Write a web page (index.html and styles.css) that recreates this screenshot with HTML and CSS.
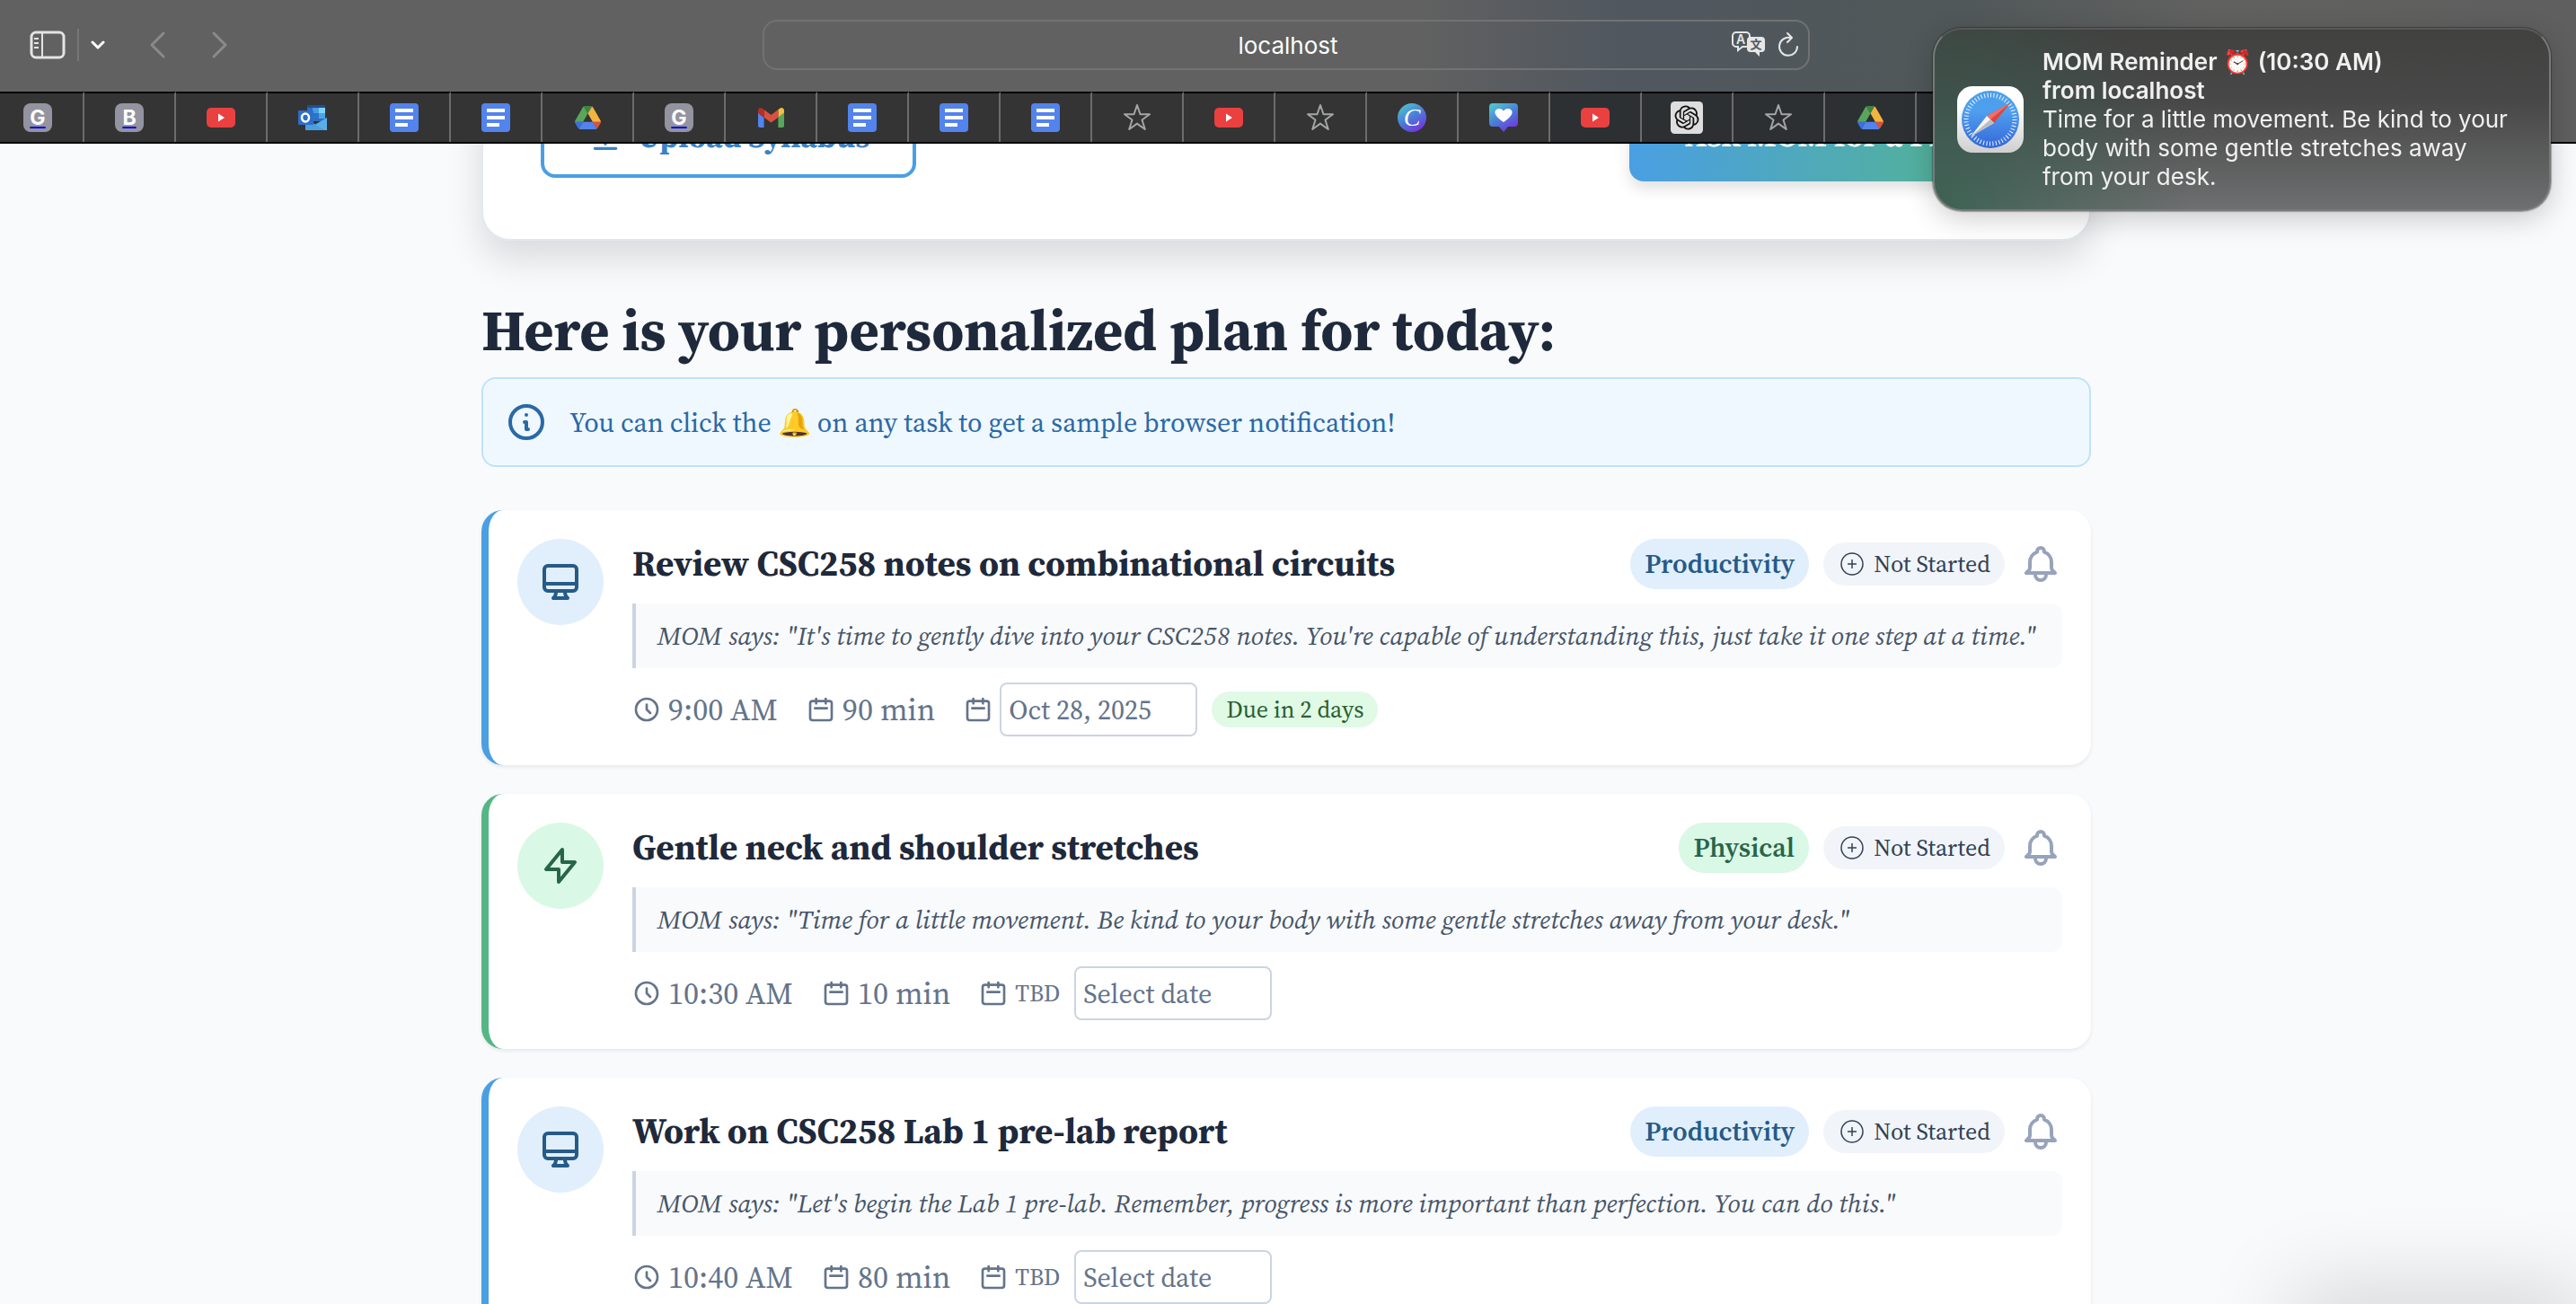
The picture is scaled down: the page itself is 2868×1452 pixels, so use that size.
FILE: index.html
```
<!DOCTYPE html>
<html lang="en">

<head>
    <meta charset="UTF-8">
    <meta name="viewport" content="width=device-width, initial-scale=1.0">
    <title>MOM - Daily Plan</title>
    <link rel="stylesheet" href="styles.css">
</head>

<body>
    <!-- Shared icons -->
    <svg class="sprite" aria-hidden="true">
        <defs>
            <linearGradient id="canvaFill" x1="0.2" y1="0" x2="0.8" y2="1">
                <stop offset="0" stop-color="#4fc3cf" />
                <stop offset="0.5" stop-color="#4a7bd8" />
                <stop offset="1" stop-color="#7a2be0" />
            </linearGradient>
            <linearGradient id="safariBase" x1="0" y1="0" x2="0" y2="1">
                <stop offset="0.3" stop-color="#ffffff" />
                <stop offset="1" stop-color="#cfcfcf" />
            </linearGradient>
            <linearGradient id="safariDial" x1="0" y1="0" x2="0" y2="1">
                <stop offset="0" stop-color="#4a9fe6" />
                <stop offset="0.35" stop-color="#4f9ff0" />
                <stop offset="1" stop-color="#3566d8" />
            </linearGradient>
            <symbol id="youtube" viewBox="0 0 32 32">
                <rect y="5" width="32" height="22" rx="5" fill="#ea4040" />
                <path d="M13 11.5v9l7-4.500z" fill="#fff" />
            </symbol>
            <symbol id="outlook" viewBox="0 0 32 32">
                <path d="M10 2h20v18H10z" fill="#2b6fc0" />
                <path d="M10 2h20v3H10z" fill="#1f4f92" />
                <path d="M16 5h7v6h-7z" fill="#4b9be0" />
                <path d="M23 5h7v6h-7z" fill="#7fd3fb" />
                <path d="M23 11h7v6h-7z" fill="#4ba3e8" />
                <path d="M16 11h7v6h-7z" fill="#2c73cb" />
                <path d="M8 16l12 8 12-8v14H8z" fill="#3b86d0" />
                <path d="M8 30l24-14v14z" fill="#5aaee8" />
                <path d="M8 18l22 12H8z" fill="#4a9fdf" />
                <rect y="8" width="17" height="16" rx="1" fill="#2d6fc9" />
                <ellipse cx="8" cy="16" rx="4" ry="4.500" fill="none" stroke="#fff" stroke-width="2.500" />
            </symbol>
            <symbol id="docs" viewBox="0 0 32 32">
                <rect width="32" height="32" rx="4" fill="#5383ec" />
                <path d="M6 8h20M6 16h20M6 24h14" stroke="#fff" stroke-width="4" />
            </symbol>
            <symbol id="drive" viewBox="0 0 87.3 78">
                <path d="m6.6 66.85 3.85 6.65c.8 1.4 1.95 2.5 3.3 3.3l13.75-23.8h-27.5c0 1.55.4 3.1 1.2 4.5z" fill="#3b6fe0" />
                <path d="m43.65 25-13.75-23.8c-1.35.8-2.5 1.9-3.3 3.3l-25.4 44a9.06 9.06 0 0 0 -1.2 4.5h27.5z" fill="#58a65c" />
                <path d="m73.55 76.8c1.35-.8 2.5-1.9 3.3-3.3l1.6-2.75 7.65-13.25c.8-1.4 1.2-2.95 1.2-4.5h-27.5l5.85 11.5z" fill="#d95140" />
                <path d="m43.65 25 13.75-23.8c-1.35-.8-2.9-1.2-4.5-1.2h-18.5c-1.6 0-3.15.45-4.5 1.2z" fill="#3f8344" />
                <path d="m59.8 53h-32.3l-13.75 23.8c1.35.8 2.9 1.2 4.5 1.2h50.8c1.6 0 3.15-.45 4.5-1.2z" fill="#5383ec" />
                <path d="m73.4 26.5-12.7-22c-.8-1.4-1.95-2.5-3.3-3.3l-13.75 23.8 16.15 28h27.45c0-1.55-.4-3.1-1.2-4.5z" fill="#f1b43f" />
            </symbol>
            <symbol id="gmail" viewBox="52 42 88 66">
                <path fill="#5383ec" d="M58 108h14V74L52 59v43c0 3.32 2.69 6 6 6" />
                <path fill="#58a65c" d="M120 108h14c3.32 0 6-2.69 6-6V59l-20 15" />
                <path fill="#f1bf42" d="M120 48v26l20-15v-8c0-7.42-8.47-11.65-14.4-7.2" />
                <path fill="#d95140" d="M72 74V48l24 18 24-18v26L96 92" />
                <path fill="#b3302a" d="M52 51v8l20 15V48l-5.6-4.2c-5.94-4.45-14.4-.22-14.4 7.2" />
            </symbol>
            <symbol id="star" viewBox="0 0 32 32">
                <path d="M16 2l3.500 10.200h10.500l-8.500 6.300 3.300 10.500-8.800-6.400-8.800 6.400 3.300-10.500L2 12.200h10.500z" fill="none" stroke="#a3a5a6" stroke-width="2" stroke-linejoin="round" />
            </symbol>
            <symbol id="canva" viewBox="0 0 32 32">
                <circle cx="16" cy="16" r="16" fill="url(#canvaFill)" />
                <text x="16" y="25" class="canva-letter" text-anchor="middle">C</text>
            </symbol>
            <symbol id="heart" viewBox="0 0 32 32">
                <path d="M4 0h24a4 4 0 0 1 4 4v18a4 4 0 0 1-4 4h-7l-5 6-5-6H4a4 4 0 0 1-4-4V4a4 4 0 0 1 4-4z" fill="url(#canvaFill)" />
                <path d="M16 21C10 17 6 13 6.500 9.500 7 5.500 13 4.500 16 8.500c3-4 9-3 9.500 1C26 13 22 17 16 21z" fill="#fff" />
            </symbol>
            <symbol id="chatgpt" viewBox="-4 -4 32 32">
                <rect x="-4" y="-4" width="32" height="32" rx="4" fill="#dedede" />
                <path d="M22.2819 9.8211a5.9847 5.9847 0 0 0-.5157-4.9108 6.0462 6.0462 0 0 0-6.5098-2.9A6.0651 6.0651 0 0 0 4.9807 4.1818a5.9847 5.9847 0 0 0-3.9977 2.9 6.0462 6.0462 0 0 0 .7427 7.0966 5.98 5.98 0 0 0 .511 4.9107 6.051 6.051 0 0 0 6.5146 2.9001A5.9847 5.9847 0 0 0 13.2599 24a6.0557 6.0557 0 0 0 5.7718-4.2058 5.9894 5.9894 0 0 0 3.9977-2.9001 6.0557 6.0557 0 0 0-.7475-7.0729zm-9.022 12.6081a4.4755 4.4755 0 0 1-2.8764-1.0408l.1419-.0804 4.7783-2.7582a.7948.7948 0 0 0 .3927-.6813v-6.7369l2.02 1.1686a.071.071 0 0 1 .038.052v5.5826a4.504 4.504 0 0 1-4.4945 4.4944zm-9.6607-4.1254a4.4708 4.4708 0 0 1-.5346-3.0137l.142.0852 4.783 2.7582a.7712.7712 0 0 0 .7806 0l5.8428-3.3685v2.3324a.0804.0804 0 0 1-.0332.0615L9.74 19.9502a4.4992 4.4992 0 0 1-6.1408-1.6464zM2.3408 7.8956a4.485 4.485 0 0 1 2.3655-1.9728V11.6a.7664.7664 0 0 0 .3879.6765l5.8144 3.3543-2.0201 1.1685a.0757.0757 0 0 1-.071 0l-4.8303-2.7865A4.504 4.504 0 0 1 2.3408 7.872zm16.5963 3.8558L13.1038 8.364 15.1192 7.2a.0757.0757 0 0 1 .071 0l4.8303 2.7913a4.4944 4.4944 0 0 1-.6765 8.1042v-5.6772a.79.79 0 0 0-.407-.667zm2.0107-3.0231l-.142-.0852-4.7735-2.7818a.7759.7759 0 0 0-.7854 0L9.409 9.2297V6.8974a.0662.0662 0 0 1 .0284-.0615l4.8303-2.7866a4.4992 4.4992 0 0 1 6.6802 4.66zM8.3065 12.863l-2.02-1.1638a.0804.0804 0 0 1-.038-.0567V6.0742a4.4992 4.4992 0 0 1 7.3757-3.4537l-.142.0805L8.704 5.459a.7948.7948 0 0 0-.3927.6813zm1.0976-2.3654l2.602-1.4998 2.6069 1.4998v2.9994l-2.5974 1.4997-2.6067-1.4997Z" fill="#111" />
            </symbol>
            <symbol id="monitor" viewBox="0 0 24 24">
                <path d="M9.75 17L9 20l-1 1h8l-1-1-.75-3M3 13h18M5 17h14a2 2 0 002-2V5a2 2 0 00-2-2H5a2 2 0 00-2 2v10a2 2 0 002 2z" />
            </symbol>
            <symbol id="bolt" viewBox="0 0 24 24">
                <path d="M13 10V3L4 14h7v7l9-11h-7z" />
            </symbol>
            <symbol id="clock" viewBox="0 0 24 24">
                <path d="M12 8v4l3 3m6-3a9 9 0 11-18 0 9 9 0 0118 0z" />
            </symbol>
            <symbol id="calendar" viewBox="0 0 24 24">
                <path d="M8 7V3m8 4V3m-9 8h10M5 21h14a2 2 0 002-2V7a2 2 0 00-2-2H5a2 2 0 00-2 2v12a2 2 0 002 2z" />
            </symbol>
            <symbol id="info" viewBox="0 0 24 24">
                <path d="M13 16h-1v-4h-1m1-4h.01M21 12a9 9 0 11-18 0 9 9 0 0118 0z" />
            </symbol>
            <symbol id="bell" viewBox="0 0 24 24">
                <path d="M15 17h5l-1.405-1.405A2.032 2.032 0 0118 14.158V11a6.002 6.002 0 00-4-5.659V5a2 2 0 10-4 0v.341C7.67 6.165 6 8.388 6 11v3.159c0 .538-.214 1.055-.595 1.436L4 17h5m6 0v1a3 3 0 11-6 0v-1m6 0H9" />
            </symbol>
            <symbol id="upload" viewBox="0 0 24 24">
                <path d="M5 20h14M12 17V5M7 10l5-5 5 5" />
            </symbol>
            <symbol id="plus-circle" viewBox="0 0 32 32">
                <circle cx="16" cy="16" r="12" stroke-width="1.5" />
                <path d="M16 11v10M11 16h10" stroke-width="1.5" />
            </symbol>
        </defs>
    </svg>

    <header class="browser">
        <div class="toolbar">
            <div class="toolbar-left">
                <button class="tool" aria-label="Sidebar">
                    <svg width="40" height="32" viewBox="0 0 40 32" fill="none" stroke="#e4e4e4" stroke-width="3">
                        <rect x="2" y="2" width="36" height="28" rx="5" />
                        <path d="M14 2v28" stroke-width="2" />
                        <path d="M5 9h5M5 14h5M5 19h5" stroke-width="2" />
                    </svg>
                </button>
                <span class="tool-divider"></span>
                <button class="tool" aria-label="Tab groups">
                    <svg width="16" height="12" viewBox="0 0 16 12" fill="none" stroke="#fff" stroke-width="3" stroke-linecap="round" stroke-linejoin="round"><path d="M2 3l6 6 6-6" /></svg>
                </button>
                <button class="tool back-btn" aria-label="Back">
                    <svg width="20" height="32" viewBox="0 0 20 32" fill="none" stroke="#8a8a88" stroke-width="3" stroke-linecap="round" stroke-linejoin="round"><path d="M17 3L4 16l13 13" /></svg>
                </button>
                <button class="tool" aria-label="Forward">
                    <svg width="20" height="32" viewBox="0 0 20 32" fill="none" stroke="#8a8a88" stroke-width="3" stroke-linecap="round" stroke-linejoin="round"><path d="M3 3l13 13L3 29" /></svg>
                </button>
            </div>
            <div class="address">
                <input type="text" value="localhost" aria-label="Address">
                <button class="tool" aria-label="Translate">
                    <svg width="40" height="32" viewBox="0 0 40 32">
                        <path d="M6 2h11a4 4 0 0 1 4 4v8a4 4 0 0 1-4 4h-4l-5 4v-4H6a4 4 0 0 1-4-4V6a4 4 0 0 1 4-4z" fill="none" stroke="#e6e6e6" stroke-width="2" />
                        <text x="11" y="15" class="glyph-a" text-anchor="middle">A</text>
                        <path d="M22 7h12a4 4 0 0 1 4 4v9a4 4 0 0 1-4 4h-2v5l-5-5h-5a4 4 0 0 1-4-4v-9a4 4 0 0 1 4-4z" fill="#e6e6e6" />
                        <text x="28" y="20" class="glyph-wen" text-anchor="middle">文</text>
                    </svg>
                </button>
                <button class="tool" aria-label="Reload">
                    <svg width="24" height="32" viewBox="0 0 24 32" fill="none" stroke="#e6e6e6" stroke-width="2" stroke-linecap="round" stroke-linejoin="round"><path d="M22 18a10 10 0 1 1-8-10M11 3l5 5-5 5" /></svg>
                </button>
            </div>
            <div class="toolbar-right">
                <button class="tool" aria-label="Share">
                    <svg width="32" height="40" viewBox="0 0 32 40" fill="none" stroke="#e6e6e6" stroke-width="3"><path d="M10 16H4v20h24V16h-6M16 26V4M10 10l6-6 6 6" /></svg>
                </button>
            </div>
        </div>
        <nav class="tabs">
            <a class="tab" href="#"><span class="letter">G</span></a>
            <a class="tab" href="#"><span class="letter">B</span></a>
            <a class="tab" href="#"><svg class="fav"><use href="#youtube" /></svg></a>
            <a class="tab" href="#"><svg class="fav"><use href="#outlook" /></svg></a>
            <a class="tab" href="#"><svg class="fav"><use href="#docs" /></svg></a>
            <a class="tab" href="#"><svg class="fav"><use href="#docs" /></svg></a>
            <a class="tab" href="#"><svg class="fav fav-small"><use href="#drive" /></svg></a>
            <a class="tab" href="#"><span class="letter">G</span></a>
            <a class="tab" href="#"><svg class="fav fav-small"><use href="#gmail" /></svg></a>
            <a class="tab" href="#"><svg class="fav"><use href="#docs" /></svg></a>
            <a class="tab" href="#"><svg class="fav"><use href="#docs" /></svg></a>
            <a class="tab" href="#"><svg class="fav"><use href="#docs" /></svg></a>
            <a class="tab" href="#"><svg class="fav"><use href="#star" /></svg></a>
            <a class="tab" href="#"><svg class="fav"><use href="#youtube" /></svg></a>
            <a class="tab" href="#"><svg class="fav"><use href="#star" /></svg></a>
            <a class="tab" href="#"><svg class="fav"><use href="#canva" /></svg></a>
            <a class="tab" href="#"><svg class="fav"><use href="#heart" /></svg></a>
            <a class="tab" href="#"><svg class="fav"><use href="#youtube" /></svg></a>
            <a class="tab" href="#"><svg class="fav fav-large"><use href="#chatgpt" /></svg></a>
            <a class="tab" href="#"><svg class="fav"><use href="#star" /></svg></a>
            <a class="tab" href="#"><svg class="fav fav-small"><use href="#drive" /></svg></a>
            <a class="tab" href="#"></a>
            <span class="tab-current"></span>
        </nav>
    </header>

    <main class="page">
        <div class="container">
            <section class="hero">
                <button class="upload-btn"><svg class="icon"><use href="#upload" /></svg>Upload Syllabus</button>
                <button class="ask-btn">Ask MOM for a Plan</button>
            </section>

            <h1>Here is your personalized plan for today:</h1>

            <div class="notice">
                <svg class="icon icon-lg"><use href="#info" /></svg>
                <p>You can click the 🔔 on any task to get a sample browser notification!</p>
            </div>

            <article class="task productivity">
                <div class="task-icon"><svg class="icon icon-lg"><use href="#monitor" /></svg></div>
                <div class="task-body">
                    <div class="task-head">
                        <h2>Review CSC258 notes on combinational circuits</h2>
                        <span class="category">Productivity</span>
                        <button class="status"><svg class="icon-thin"><use href="#plus-circle" /></svg>Not Started</button>
                        <button class="bell" aria-label="Notify me"><svg class="icon icon-lg"><use href="#bell" /></svg></button>
                    </div>
                    <p class="quote">MOM says: "It's time to gently dive into your CSC258 notes. You're capable of understanding this, just take it one step at a time."</p>
                    <div class="meta">
                        <span class="meta-item"><svg class="icon"><use href="#clock" /></svg>9:00 AM</span>
                        <span class="meta-item"><svg class="icon"><use href="#calendar" /></svg>90 min</span>
                        <div class="due">
                            <svg class="icon"><use href="#calendar" /></svg>
                            <input type="text" value="Oct 28, 2025" aria-label="Due date">
                            <span class="due-badge">Due in 2 days</span>
                        </div>
                    </div>
                </div>
            </article>

            <article class="task physical">
                <div class="task-icon"><svg class="icon icon-lg"><use href="#bolt" /></svg></div>
                <div class="task-body">
                    <div class="task-head">
                        <h2>Gentle neck and shoulder stretches</h2>
                        <span class="category">Physical</span>
                        <button class="status"><svg class="icon-thin"><use href="#plus-circle" /></svg>Not Started</button>
                        <button class="bell" aria-label="Notify me"><svg class="icon icon-lg"><use href="#bell" /></svg></button>
                    </div>
                    <p class="quote">MOM says: "Time for a little movement. Be kind to your body with some gentle stretches away from your desk."</p>
                    <div class="meta">
                        <span class="meta-item"><svg class="icon"><use href="#clock" /></svg>10:30 AM</span>
                        <span class="meta-item"><svg class="icon"><use href="#calendar" /></svg>10 min</span>
                        <div class="due">
                            <svg class="icon"><use href="#calendar" /></svg>
                            <span class="tbd">TBD</span>
                            <input type="text" placeholder="Select date" aria-label="Due date">
                        </div>
                    </div>
                </div>
            </article>

            <article class="task productivity">
                <div class="task-icon"><svg class="icon icon-lg"><use href="#monitor" /></svg></div>
                <div class="task-body">
                    <div class="task-head">
                        <h2>Work on CSC258 Lab 1 pre-lab report</h2>
                        <span class="category">Productivity</span>
                        <button class="status"><svg class="icon-thin"><use href="#plus-circle" /></svg>Not Started</button>
                        <button class="bell" aria-label="Notify me"><svg class="icon icon-lg"><use href="#bell" /></svg></button>
                    </div>
                    <p class="quote">MOM says: "Let's begin the Lab 1 pre-lab. Remember, progress is more important than perfection. You can do this."</p>
                    <div class="meta">
                        <span class="meta-item"><svg class="icon"><use href="#clock" /></svg>10:40 AM</span>
                        <span class="meta-item"><svg class="icon"><use href="#calendar" /></svg>80 min</span>
                        <div class="due">
                            <svg class="icon"><use href="#calendar" /></svg>
                            <span class="tbd">TBD</span>
                            <input type="text" placeholder="Select date" aria-label="Due date">
                        </div>
                    </div>
                </div>
            </article>
        </div>
    </main>

    <aside class="notification">
        <svg class="safari" viewBox="0 0 76 76">
            <rect x="1" y="1" width="74" height="74" rx="17" fill="url(#safariBase)" />
            <circle cx="38" cy="38" r="32" fill="url(#safariDial)" />
            <circle cx="38" cy="38" r="27" fill="none" stroke="#e8f2fd" stroke-width="5" pathLength="96" stroke-dasharray="0.6 1.4" />
            <path d="M60 20L42 42l-8-8z" fill="#e0443c" />
            <path d="M60 20L38 38l-4-4z" fill="#f07066" />
            <path d="M16 57L34 34l8 8z" fill="#f4f4f4" />
            <path d="M16 57L38 38l4 4z" fill="#bdbdbd" />
        </svg>
        <div class="notification-text">
            <strong>MOM Reminder ⏰ (10:30 AM)</strong>
            <strong>from localhost</strong>
            <p>Time for a little movement. Be kind to your body with some gentle stretches away from your desk.</p>
        </div>
    </aside>

    <div class="corner-shadow"></div>
</body>

</html>
```
FILE: styles.css
```
* {
    box-sizing: border-box;
}

body {
    display: flex;
    flex-direction: column;
    margin: 0;
    height: 100vh;
    overflow: hidden;
    font-family: "Source Serif 4", "Liberation Serif", serif;
    background-color: #f9fafc;
    color: #1e293b;
}

h1,
h2,
p {
    margin: 0;
}

button,
input {
    font-family: inherit;
}

button {
    border: none;
    cursor: pointer;
}

.sprite {
    position: absolute;
    width: 0;
    height: 0;
}

/* Browser bar */
.browser {
    flex: none;
    background: linear-gradient(90deg, #616161 0%, #616161 55%, #50575f 63%, #515859 76%, #616160 86%, #5f5f5f 100%);
    border-bottom: 2px solid #000;
    font-family: Inter, sans-serif;
}

.toolbar {
    display: grid;
    grid-template-columns: 1fr minmax(0, 1166px) 1fr;
    align-items: center;
    height: 102px;
    padding: 0 4px 2px 0;
}

.toolbar-left {
    display: flex;
    align-items: center;
    padding-left: 33px;
}

.tool {
    display: flex;
    padding: 0;
    background: none;
}

.tool-divider {
    width: 2px;
    height: 36px;
    margin: 0 13px;
    background-color: #777;
}

.back-btn {
    margin: 0 50px 0 48px;
}

.address {
    display: flex;
    align-items: center;
    gap: 12px;
    height: 56px;
    padding: 0 10px 0 102px;
    border: 2px solid #717272;
    border-radius: 16px;
}

.address input {
    flex: 1;
    min-width: 0;
    border: none;
    background: none;
    color: #fff;
    font-size: 26px;
    text-align: center;
}

.glyph-a {
    font: 600 14px Inter, sans-serif;
    fill: #e6e6e6;
}

.glyph-wen {
    font: 700 13px "Noto Sans CJK SC", sans-serif;
    fill: #50575f;
}

.toolbar-right {
    display: flex;
    justify-content: flex-end;
    padding-right: 182px;
}

.tabs {
    display: flex;
    height: 56px;
    margin-left: -8px;
}

.tab {
    display: flex;
    flex: none;
    align-items: center;
    justify-content: center;
    width: 102px;
    border-top: 2px solid #000;
    border-right: 2px solid #6c6c6c;
    background-color: #343434;
}

.tab:nth-child(n+18) {
    background-color: #2c3032;
}

.tab-current {
    flex: 1;
}

.letter {
    width: 32px;
    height: 32px;
    border-radius: 8px;
    background-color: #9494a0;
    color: #fff;
    font-size: 23px;
    font-weight: 700;
    line-height: 32px;
    text-align: center;
}

.fav {
    width: 32px;
    height: 32px;
}

.fav-small {
    width: 29px;
    height: 26px;
}

.fav-large {
    width: 36px;
    height: 36px;
}

.canva-letter {
    font: italic 28px "Liberation Serif", serif;
    fill: #fff;
}

/* Page */
.page {
    flex: 1;
    overflow: hidden;
    padding-right: 4px;
}

.container {
    max-width: 1792px;
    margin: 0 auto;
}

.icon {
    flex: none;
    width: 32px;
    height: 32px;
    fill: none;
    stroke: currentColor;
    stroke-width: 2;
    stroke-linecap: round;
    stroke-linejoin: round;
}

.icon-lg {
    width: 48px;
    height: 48px;
}

.icon-thin {
    width: 32px;
    height: 32px;
    fill: none;
    stroke: currentColor;
}

/* the card is scrolled partly under the browser bar */
.hero {
    display: flex;
    align-items: center;
    justify-content: space-between;
    margin-top: -116px;
    padding: 64px;
    border: 2px solid #e2e8f0;
    border-radius: 32px;
    background-color: #fff;
    box-shadow: 0 20px 40px rgba(0, 0, 0, 0.13);
}

.upload-btn {
    display: flex;
    align-items: center;
    gap: 16px;
    height: 84px;
    padding: 0 48px 8px;
    border: 4px solid #4a9fe3;
    border-radius: 16px;
    background-color: #fff;
    color: #3c82c4;
    font-size: 35px;
    font-weight: 700;
}

.upload-btn .icon {
    width: 40px;
    height: 40px;
}

.ask-btn {
    width: 448px;
    height: 92px;
    padding: 0 0 12px;
    border-radius: 16px;
    background: linear-gradient(90deg, #4a9fe3, #55b685);
    box-shadow: 0 8px 16px rgba(0, 0, 0, 0.12);
    color: #fff;
    font-size: 36px;
    font-weight: 700;
}

h1 {
    margin: 64px 0 16px;
    font-size: 64px;
    font-weight: 700;
    line-height: 72px;
}

.notice {
    display: flex;
    align-items: center;
    gap: 24px;
    height: 100px;
    margin-bottom: 48px;
    padding: 0 24px;
    border: 2px solid #bee3f8;
    border-radius: 16px;
    background-color: #f0f8ff;
    color: #2a69a6;
    font-size: 30px;
}

/* Task cards */
.task {
    display: flex;
    gap: 32px;
    margin-bottom: 32px;
    padding: 32px;
    border-left: 8px solid #4a9fe3;
    border-radius: 24px;
    background-color: #fff;
    box-shadow: 0 2px 4px rgba(0, 0, 0, 0.08);
}

.task-icon {
    display: flex;
    flex: none;
    align-items: center;
    justify-content: center;
    width: 96px;
    height: 96px;
    border-radius: 50%;
}

.productivity .task-icon,
.productivity .category {
    background-color: #e1effc;
    color: #265a87;
}

.physical {
    border-left-color: #55b685;
}

.physical .task-icon,
.physical .category {
    background-color: #d9f8e5;
    color: #28644a;
}

.task-body {
    flex: 1;
    min-width: 0;
}

.task-head {
    display: flex;
    align-items: center;
    gap: 16px;
    height: 56px;
}

.task-head h2 {
    flex: 1;
    padding-bottom: 2px;
    font-size: 39px;
    font-weight: 700;
}

.category {
    padding: 0 16px;
    border-radius: 28px;
    font-size: 30px;
    font-weight: 600;
    line-height: 56px;
}

.status {
    display: flex;
    align-items: center;
    gap: 8px;
    height: 48px;
    padding: 0 16px;
    border-radius: 24px;
    background-color: #f1f5f9;
    color: #334155;
    font-size: 26px;
}

.bell {
    display: flex;
    padding: 0;
    background: none;
    color: #97a3ba;
}

.quote {
    margin: 16px 0;
    padding: 0 16px 0 24px;
    border-left: 4px solid #cbd5e1;
    border-radius: 0 12px 12px 0;
    background-color: #f8fafc;
    color: #475569;
    font-size: 29px;
    font-style: italic;
    line-height: 72px;
    white-space: nowrap;
}

.meta {
    display: flex;
    align-items: center;
    gap: 32px;
    height: 60px;
    color: #64748b;
    font-size: 34px;
}

.meta-item,
.due {
    display: flex;
    align-items: center;
    gap: 8px;
}

.due input {
    width: 220px;
    height: 60px;
    padding: 0 8px;
    border: 2px solid #cbd5e1;
    border-radius: 8px;
    background-color: #fff;
    color: #64748b;
    font-size: 30px;
}

.due input::placeholder {
    color: #64748b;
}

.due-badge {
    margin-left: 8px;
    padding: 0 16px;
    border-radius: 20px;
    background-color: #e0fae6;
    color: #296030;
    font-size: 26px;
    line-height: 40px;
}

.tbd {
    margin-right: 8px;
    font-size: 26px;
}

/* Desktop notification */
.notification {
    position: fixed;
    top: 31px;
    right: 28px;
    z-index: 3;
    display: flex;
    align-items: center;
    gap: 20px;
    width: 688px;
    padding: 20px 36px 20px 24px;
    border: 2px solid #777a79;
    border-top-color: #585858;
    border-radius: 32px;
    background: radial-gradient(circle at 0% 100%, rgba(50, 95, 78, 0.8), rgba(60, 80, 72, 0) 40%), linear-gradient(#414140, #484848 40%, #6e6f70);
    box-shadow: 0 0 2px #000, 0 8px 32px rgba(0, 0, 0, 0.2);
    color: #f0f0f0;
    font-family: Inter, sans-serif;
    font-size: 26px;
    line-height: 32px;
}

.safari {
    flex: none;
    width: 76px;
    height: 76px;
}

.notification strong {
    display: block;
    font-weight: 600;
}

.corner-shadow {
    position: fixed;
    right: 16px;
    bottom: -40px;
    width: 272px;
    height: 20px;
    box-shadow: 0 0 100px 30px rgba(0, 0, 0, 0.18);
}
```
